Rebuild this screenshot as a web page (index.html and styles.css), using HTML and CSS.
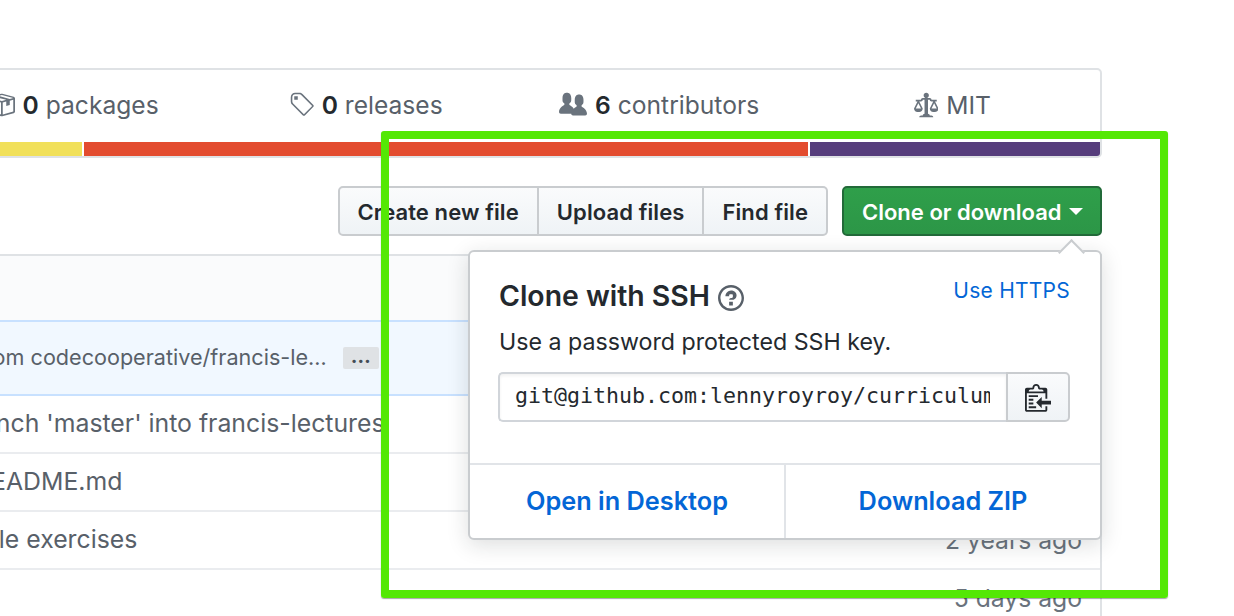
FILE: index.html
```html
<!DOCTYPE html>
<html lang="en">
<head>
<meta charset="utf-8">
<title>curriculum</title>
<link rel="stylesheet" href="styles.css">
</head>
<body>
<main class="repo">
  <section class="summary">
    <ul class="stats">
      <li class="stat"><svg class="ico w16" viewBox="0 0 16 16"><path d="M1 4.27v7.47c0 .45.3.84.75.97l6.5 1.73c.16.05.34.05.5 0l6.5-1.73c.45-.13.75-.52.75-.97V4.27c0-.45-.3-.84-.75-.97l-6.5-1.74a1.4 1.4 0 00-.5 0L1.75 3.3c-.45.13-.75.52-.75.97zm7 9.09l-6-1.59V5l6 1.61v6.75zM2 4l2.5-.67L11 5.06l-2.5.67L2 4zm13 7.77l-6 1.59V6.61l2-.55V8.5l2-.53V5.53L15 5v6.77zm-2-7.24L6.5 2.8l2-.53L15 4l-2 .53z"/></svg><span><b>0</b> packages</span></li>
      <li class="stat"><svg class="ico w14" viewBox="0 0 14 16"><path d="M7.73 1.73C7.26 1.26 6.62 1 5.96 1H3.5C2.13 1 1 2.13 1 3.5V5.97c0 .66.27 1.3.73 1.77l6.06 6.06c.39.39 1.02.39 1.41 0l4.59-4.59a.996.996 0 000-1.41L7.73 1.73zM2.38 7.09c-.31-.3-.47-.7-.47-1.13V3.5c0-.88.72-1.59 1.59-1.59h2.47c.42 0 .83.16 1.13.47l6.14 6.13-4.73 4.73-6.13-6.15zM3.01 3h2v2H3V3h.01z"/></svg><span><b>0</b> releases</span></li>
      <li class="stat"><svg class="ico w16" viewBox="0 0 16 16"><path d="M16 12.999c0 .439-.45 1-1 1H7.995c-.539 0-.994-.447-.995-.999H1c-.54 0-1-.561-1-1 0-2.634 3-4 3-4s.229-.409 0-1c-.841-.621-1.058-.59-1-3 .058-2.419 1.367-3 2.5-3s2.442.58 2.5 3c.058 2.41-.159 2.379-1 3-.229.59 0 1 0 1s1.549.711 2.42 2.088C9.196 9.369 10 8.999 10 8.999s.229-.409 0-1c-.841-.62-1.058-.59-1-3 .058-2.419 1.367-3 2.5-3s2.437.581 2.495 3c.059 2.41-.158 2.38-1 3-.229.59 0 1 0 1s3.005 1.366 3.005 4z"/></svg><span><b>6</b> contributors</span></li>
      <li class="stat"><svg class="ico w14" viewBox="0 0 14 16"><path d="M7 4c-.83 0-1.5-.67-1.5-1.5S6.17 1 7 1s1.5.67 1.5 1.5S7.83 4 7 4zm7 6c0 1.11-.89 2-2 2h-1c-1.11 0-2-.89-2-2l2-4h-1c-.55 0-1-.45-1-1H8v8c.42 0 1 .45 1 1h1c.42 0 1 .45 1 1H3c0-.55.58-1 1-1h1c0-.55.58-1 1-1h.03L6 5H5c0 .55-.45 1-1 1H3l2 4c0 1.11-.89 2-2 2H2c-1.11 0-2-.89-2-2l2-4H1V5h3c0-.55.45-1 1-1h4c.55 0 1 .45 1 1h3v1h-1l2 4zM2.5 7L1 10h3L2.5 7zM13 10l-1.5-3-1.5 3h3z"/></svg><span>MIT</span></li>
    </ul>
    <div class="langbar">
      <span class="lang yellow"></span>
      <span class="lang red"></span>
      <span class="lang purple"></span>
    </div>
  </section>

  <section class="actions">
    <div class="btn-group">
      <button class="btn">Create new file</button>
      <button class="btn">Upload files</button>
      <button class="btn">Find file</button>
    </div>
    <div class="clone">
      <button class="btn-clone">Clone or download<span class="caret"></span></button>
      <div class="popover">
        <div class="pop-body">
          <div class="pop-head">
            <h4 class="pop-title">Clone with SSH <svg class="q" viewBox="0 0 14 16"><path d="M6 10h2v2H6v-2zm4-3.5C10 8.64 8 9 8 9H6c0-.55.45-1 1-1h.5c.28 0 .5-.22.5-.5v-1c0-.28-.22-.5-.5-.5h-1c-.28 0-.5.22-.5.5V7H4c0-1.5 1.5-3 3-3s3 1 3 2.5zM7 2.3c3.14 0 5.7 2.56 5.7 5.7s-2.56 5.7-5.7 5.7A5.71 5.71 0 011.3 8c0-3.14 2.56-5.7 5.7-5.7zM7 1C3.14 1 0 4.14 0 8s3.14 7 7 7 7-3.14 7-7-3.14-7-7-7z"/></svg></h4>
            <a class="use-https">Use HTTPS</a>
          </div>
          <p class="pop-desc">Use a password protected SSH key.</p>
          <div class="url-group">
            <div class="url"><div class="url-text">git@github.com:lennyroyroy/curriculum.git</div></div>
            <button class="copy"><svg class="clip" viewBox="0 0 14 16"><path d="M2 13h4v1H2v-1zm5-6H2v1h5V7zm2 3V8l-3 3 3 3v-2h5v-2H9zM4.5 9H2v1h2.5V9zM2 12h2.5v-1H2v1zm9 1h1v2c-.02.28-.11.52-.3.7-.19.18-.42.28-.7.3H1c-.55 0-1-.45-1-1V4c0-.55.45-1 1-1h3c0-1.11.89-2 2-2 1.11 0 2 .89 2 2h3c.55 0 1 .45 1 1v5h-1V6H1v9h10v-2zM2 5h8c0-.55-.45-1-1-1H8c-.55 0-1-.45-1-1s-.45-1-1-1-1 .45-1 1-.45 1-1 1H3c-.55 0-1 .45-1 1z"/></svg></button>
          </div>
        </div>
        <div class="pop-foot">
          <a class="foot-link">Open in Desktop</a>
          <a class="foot-link">Download ZIP</a>
        </div>
      </div>
    </div>
  </section>

  <section class="files">
    <div class="row-head"></div>
    <div class="row row-tease"><span class="tease-msg">Merge pull request #3 from codecooperative/francis-le…</span><span class="more">…</span></div>
    <div class="row"><span class="msg">Merge branch 'master' into francis-lectures</span><span class="age">5 days ago</span></div>
    <div class="row"><span class="msg">Created README.md</span><span class="age">2 years ago</span></div>
    <div class="row"><span class="msg">Put example exercises</span><span class="age">2 years ago</span></div>
    <div class="row"><span class="msg"></span><span class="age">5 days ago</span></div>
  </section>
</main>
<div class="frame"></div>
</body>
</html>
```
FILE: styles.css
```css
* { box-sizing: border-box; }
html, body { margin: 0; height: 616px; overflow: hidden; background: #fff; }
body { font-family: Inter, "Liberation Sans", sans-serif; color: #24292e; }

.repo { width: 1102px; padding-top: 68px; }

.summary { margin-left: -75px; border: 2px solid #dfe2e5; border-radius: 5px; overflow: hidden; }
.stats { display: grid; grid-template-columns: repeat(4, 1fr); margin: 0; padding: 0; list-style: none; height: 72px; }
.stat { display: flex; align-items: center; justify-content: center; gap: 8px; padding: 0 2px 2px 0; font-size: 24.6px; color: #586069; }
.stat b { color: #24292e; font-weight: 600; }
.ico { height: 28px; fill: #6a737d; flex: none; }
.w16 { width: 28px; }
.w14 { width: 24.5px; }
.langbar { display: flex; gap: 2px; height: 14px; }
.lang { display: block; }
.yellow { flex: 0 0 155px; background: #f1e05a; }
.red { flex: 0 0 724px; background: #e34c2f; }
.purple { flex: 1; background: #563d7c; }

.actions { display: flex; justify-content: flex-end; gap: 14px; margin-top: 28px; height: 50px; }
.btn-group { display: flex; }
.btn { height: 50px; padding: 1px 18px 0; font: 600 22px Inter, sans-serif; letter-spacing: .1px; color: #24292e; background: linear-gradient(#fafbfc, #eff3f6); border: 2px solid #c9cccf; border-left-width: 0; }
.btn:first-child { border-left-width: 2px; border-radius: 5px 0 0 5px; }
.btn:last-child { border-radius: 0 5px 5px 0; }
.clone { position: relative; }
.btn-clone { display: flex; align-items: center; gap: 7px; width: 260px; height: 50px; padding: 1px 18px 0; font: 600 22px Inter, sans-serif; color: #fff; white-space: nowrap; background: linear-gradient(#2f9f4a, #2c9647); border: 2px solid #226a39; border-radius: 5px; }
.caret { width: 0; height: 0; border: 7px solid transparent; border-top-color: #fff; border-bottom-width: 0; }

.popover { position: absolute; top: 64px; right: 0; width: 634px; height: 290px; background: #fff; border: 2px solid #c9cccf; border-radius: 6px; box-shadow: 0 5px 21px rgba(27,31,35,.15); display: flex; flex-direction: column; z-index: 2; }
.popover::before { content: ""; position: absolute; top: -9px; right: 19px; width: 17px; height: 17px; background: #fff; border-left: 2px solid #c9cccf; border-top: 2px solid #c9cccf; transform: rotate(45deg); }
.pop-body { flex: 1; padding: 22px 30px 0 28px; position: relative; }
.pop-head { display: flex; justify-content: space-between; align-items: flex-start; }
.pop-title { margin: 0 0 0 1px; font-size: 28.4px; line-height: 44px; font-weight: 600; display: flex; align-items: center; gap: 8px; }
.q { width: 26px; height: 30px; fill: #586069; margin-top: 3px; }
.use-https { font-size: 21px; line-height: 36px; color: #0366d6; letter-spacing: .25px; margin: -1px 0 0 0; }
.pop-desc { margin: 6px 0 0 1px; font-size: 23.2px; line-height: 36px; color: #24292e; }
.url-group { display: flex; margin-top: 12px; height: 50px; }
.url { flex: 1; min-width: 0; padding: 0 16px 0 15px; background: #fff; border: 2px solid #d1d5da; border-right: 0; border-radius: 5px 0 0 5px; box-shadow: inset 0 2px 3px rgba(27,31,35,.06); }
.url-text { overflow: hidden; white-space: nowrap; font: 21.6px/43px "DejaVu Sans Mono", monospace; color: #24292e; }
.copy { flex: 0 0 64px; display: flex; align-items: center; justify-content: center; background: linear-gradient(#fafbfc, #eff3f6); border: 2px solid #c9cccf; border-radius: 0 5px 5px 0; padding: 0 1px 0 0; }
.clip { width: 26px; height: 30px; fill: #24292e; }
.pop-foot { display: grid; grid-template-columns: 316px 1fr; height: 75px; border-top: 2px solid #e1e4e8; }
.foot-link { display: flex; align-items: center; justify-content: center; padding-bottom: 2px; font-size: 25.3px; font-weight: 600; color: #0366d6; }
.foot-link:first-child { border-right: 2px solid #e1e4e8; }

.files { margin-top: 18px; margin-left: -400px; border: 2px solid #dfe2e5; border-left: 0; border-bottom: 0; }
.row-head { height: 66px; background: #fafbfc; border-bottom: 2px solid #c8e1ff; }
.row { display: flex; align-items: center; height: 58px; padding: 0 18px 2px 275px; border-bottom: 2px solid #eaecef; font-size: 24.8px; color: #586069; }
.row-tease { height: 74px; padding-left: 146px; background: #f1f8ff; border-bottom: 2px solid #c8e1ff; font-size: 21.6px; }
.msg { flex: 1; white-space: nowrap; }
.tease-msg { white-space: nowrap; }
.age { color: #6a737d; font-size: 24.7px; margin-top: 1px; }
.more { display: inline-block; width: 36px; height: 22px; margin: 2px 0 0 16px; background: #dfe2e5; border-radius: 2px; font-size: 20px; line-height: 18px; font-weight: 700; text-align: center; color: #444d56; }

.frame { position: absolute; left: 381px; top: 131px; width: 787px; height: 467px; border: 8px solid #54e805; border-radius: 3px; box-shadow: 0 1px 1px rgba(0,0,0,.35); z-index: 5; pointer-events: none; }
```
